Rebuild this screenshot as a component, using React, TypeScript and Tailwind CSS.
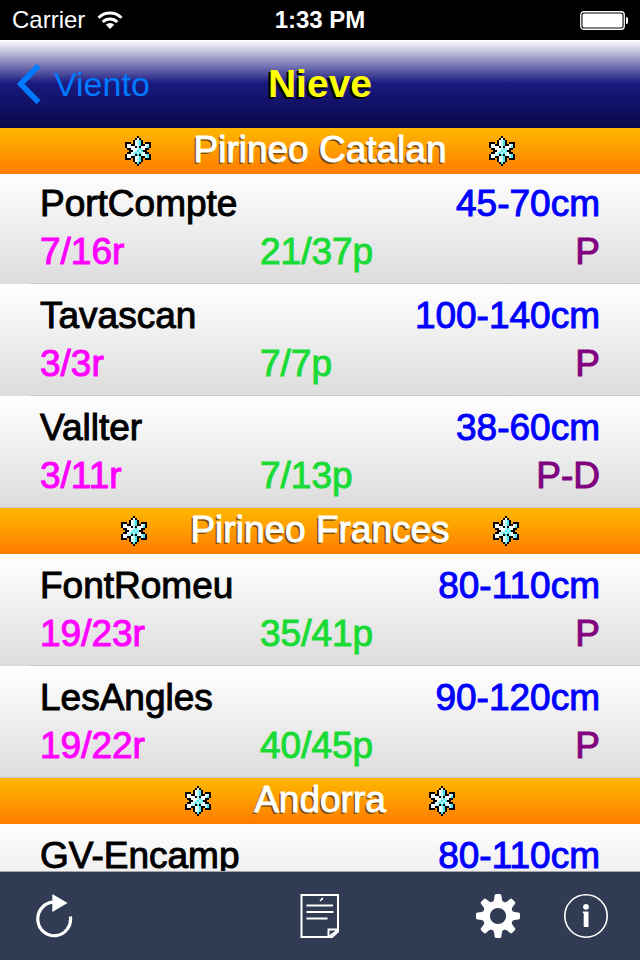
import React from "react";

type Station = { name: string; snow: string; runs?: string; lifts?: string; quality?: string };
type Region = { name: string; pinned?: boolean; stations: Station[] };

const regions: Region[] = [
  {
    name: "Pirineo Catalan",
    pinned: true,
    stations: [
      { name: "PortCompte", snow: "45-70cm", runs: "7/16r", lifts: "21/37p", quality: "P" },
      { name: "Tavascan", snow: "100-140cm", runs: "3/3r", lifts: "7/7p", quality: "P" },
      { name: "Vallter", snow: "38-60cm", runs: "3/11r", lifts: "7/13p", quality: "P-D" },
    ],
  },
  {
    name: "Pirineo Frances",
    stations: [
      { name: "FontRomeu", snow: "80-110cm", runs: "19/23r", lifts: "35/41p", quality: "P" },
      { name: "LesAngles", snow: "90-120cm", runs: "19/22r", lifts: "40/45p", quality: "P" },
    ],
  },
  { name: "Andorra", stations: [{ name: "GV-Encamp", snow: "80-110cm" }] },
];

// One character per pixel: K outline, W white, C cyan, L light cyan
const flake = [
  "......K......",
  ".....KWK.....",
  "....KWLCK....",
  "KKK.KWLCK.KKK",
  "KWWKKWLCKKWLK",
  "KWWWWKLKWWWCK",
  ".KKWWWLCLWKK.",
  "..KKWLCLCKK..",
  ".KKWLCLCLWKK.",
  "KWWLLKCKLWLCK",
  "KWWKKWLCKKLCK",
  "KKK.KWLCK.KKK",
  "....KWLCK....",
  ".....KCK.....",
  "......K......",
];
const flakeColors: Record<string, string> = { K: "#000000", W: "#ffffff", L: "#b9fbfb", C: "#4fe3e6" };

function Snowflake() {
  return (
    <svg className="h-[30px] w-[26px] shrink-0" viewBox="0 0 13 15" shapeRendering="crispEdges" aria-hidden="true">
      {flake.flatMap((row, y) =>
        row.split("").map((c, x) =>
          c === "." ? null : <rect key={`${x}-${y}`} x={x} y={y} width="1" height="1" fill={flakeColors[c]} />
        )
      )}
    </svg>
  );
}

function StatusBar() {
  return (
    <div className="grid h-10 shrink-0 grid-cols-3 items-center bg-black px-3 text-2xl text-white">
      <div className="flex items-center gap-3">
        <span>Carrier</span>
        <svg className="h-[18px] w-[26px]" viewBox="0 0 26 18" fill="none" stroke="#fff" strokeWidth="3" aria-hidden="true">
          <path d="M1.5 6.8a16.3 16.3 0 0 1 23 0" />
          <path d="M5.7 11a10.4 10.4 0 0 1 14.6 0" />
          <path d="M13 18l-4.2-4.3a6 6 0 0 1 8.4 0z" fill="#fff" stroke="none" />
        </svg>
      </div>
      <span className="text-center font-bold">1:33 PM</span>
      <svg className="h-5 w-12 justify-self-end" viewBox="0 0 48 20" aria-hidden="true">
        <rect x="0.75" y="1.75" width="43.5" height="17.5" rx="3" fill="none" stroke="#fff" strokeWidth="1.3" />
        <rect x="2.5" y="3.5" width="40" height="14" rx="1.5" fill="#fff" />
        <path d="M46 7a3.6 3.6 0 0 1 0 7z" fill="#fff" />
      </svg>
    </div>
  );
}

function NavBar() {
  return (
    <header className="grid h-[88px] shrink-0 grid-cols-[1fr_auto_1fr] items-center bg-[linear-gradient(to_bottom,#ffffff_0%,#1a1a80_49%,#08084a_100%)] px-4">
      <button type="button" className="flex items-center gap-3 justify-self-start text-[34px] leading-10 text-[#007aff]">
        <svg className="h-10 w-[26px]" viewBox="0 0 26 40" fill="none" stroke="#007aff" strokeWidth="5.6" aria-hidden="true">
          <path d="M22.6 1.8L4.6 20l18 18.2" />
        </svg>
        <span>Viento</span>
      </button>
      <h1 className="text-[39px] leading-10 font-bold text-[#ffff00] [text-shadow:-2px_2px_0_#000]">Nieve</h1>
    </header>
  );
}

function StationRow({ station }: { station: Station }) {
  return (
    <li className="relative min-h-28 bg-linear-to-b from-white to-[#dcdcdc] px-10 py-2 text-[37px] leading-12 after:absolute after:right-0 after:bottom-0 after:left-[30px] after:h-px after:bg-[#c8c7cc] last:after:left-0">
      <div className="flex justify-between leading-12">
        <span className="text-black [-webkit-text-stroke:1px_currentColor]">{station.name}</span>
        <span className="text-[#0000ff] [-webkit-text-stroke:1px_currentColor]">{station.snow}</span>
      </div>
      <div className="grid grid-cols-[11fr_11fr_6fr] leading-12">
        <span className="text-[#ff00ff] [-webkit-text-stroke:1px_currentColor]">{station.runs}</span>
        <span className="text-[#1adb36] [-webkit-text-stroke:1px_currentColor]">{station.lifts}</span>
        <span className="text-right text-[#800080] [-webkit-text-stroke:1px_currentColor]">{station.quality}</span>
      </div>
    </li>
  );
}

function RegionSection({ region }: { region: Region }) {
  return (
    <section>
      <h2
        className={`${region.pinned ? "sticky top-0 z-10 -mb-0.5" : ""} flex h-[46px] items-center justify-center gap-[43px] bg-linear-to-b from-[#ffb700] to-[#ff7b00] text-[37px] text-white`}
      >
        <Snowflake />
        <span className="pb-0.5 leading-10 [-webkit-text-stroke:1px_currentColor] [text-shadow:-2px_2px_0_#80500a]">
          {region.name}
        </span>
        <Snowflake />
      </h2>
      <ul>
        {region.stations.map((s) => (
          <StationRow key={s.name} station={s} />
        ))}
      </ul>
    </section>
  );
}

function Toolbar() {
  return (
    <nav className="grid h-[89px] shrink-0 grid-cols-3 items-center border-t border-[#a4a6ab] bg-[#313b54] px-8">
      <button type="button" aria-label="Actualizar" className="size-11 justify-self-start">
        <svg viewBox="0 0 44 44" fill="none" aria-hidden="true">
          <path d="M38.4 22.5A16.4 16.8 0 1 1 21 8.2" stroke="#fff" strokeWidth="3.2" />
          <path d="M20.3 0L35.6 9L20.3 18z" fill="#fff" />
        </svg>
      </button>
      <button type="button" aria-label="Notas" className="size-11 justify-self-center">
        <svg viewBox="0 0 44 44" fill="none" stroke="#fff" strokeWidth="2" aria-hidden="true">
          <path d="M3.5 1H40v36.5L34 43H3.5z" />
          <path d="M40 35.5h-9.5V43L40 36" />
          <path d="M8.5 11.5H35M8.5 18H35.5M8.5 24.5H29.5" />
          <path d="M22 7l3-3" strokeWidth="1.5" />
          <circle cx="24" cy="5" r="1" fill="#fff" stroke="none" />
        </svg>
      </button>
      <div className="flex gap-11 justify-self-end">
        <button type="button" aria-label="Ajustes" className="size-11">
          <svg viewBox="0 0 44 44" aria-hidden="true">
            <g fill="#fff">
              {[0, 45, 90, 135, 180, 225, 270, 315].map((a) => (
                <path key={a} transform={`rotate(${a} 22 22)`} d="M16.5 9Q18.2 7 18.6 1.5Q18.7 0 20.2 0H23.8Q25.3 0 25.4 1.5Q25.8 7 27.5 9z" />
              ))}
            </g>
            <circle cx="22" cy="22" r="11.7" fill="none" stroke="#fff" strokeWidth="7.2" />
          </svg>
        </button>
        <button type="button" aria-label="Información" className="size-11">
          <svg viewBox="0 0 44 44" aria-hidden="true">
            <circle cx="22" cy="22" r="21.2" fill="none" stroke="#fff" strokeWidth="1.6" />
            <circle cx="22" cy="12.8" r="2.9" fill="#fff" />
            <path d="M18.8 17.5h5.7V33h-4.8V19.2h-0.9z" fill="#fff" />
          </svg>
        </button>
      </div>
    </nav>
  );
}

export default function App() {
  return (
    <div className="flex h-screen flex-col overflow-hidden bg-white font-['Liberation_Sans',Arial,sans-serif]">
      <StatusBar />
      <NavBar />
      <main className="min-h-0 flex-1 overflow-hidden">
        {regions.map((r) => (
          <RegionSection key={r.name} region={r} />
        ))}
      </main>
      <Toolbar />
    </div>
  );
}
